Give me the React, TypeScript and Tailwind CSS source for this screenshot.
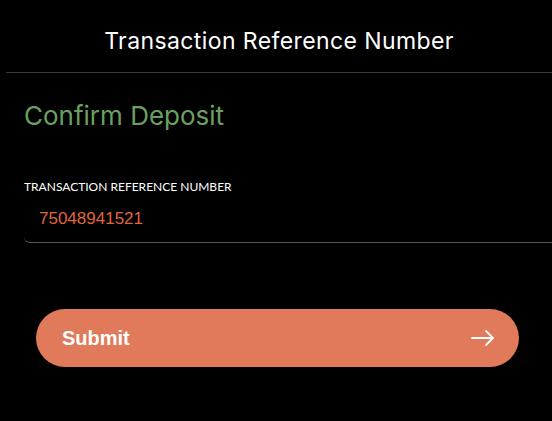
import React, { useState } from 'react';

const App = () => {
  const [refNo, setRefNo] = useState('75048941521');

  return (
    <div className="min-h-[421px] w-full bg-black">
      <div className="ml-[6px] flex h-[73px] items-center justify-center border-b border-[#3a3a3a] pt-[10px]">
        <h1 className="font-['Inter',sans-serif] text-[23px] font-normal tracking-[0.4px] text-white">
          Transaction Reference Number
        </h1>
      </div>

      <div className="pl-6 pt-[26px]">
        <h2 className="font-['Inter',sans-serif] text-[26px] leading-[34px] text-[#6aa062]">
          Confirm Deposit
        </h2>

        <div className="mt-[46px]">
          <label className="block font-['Lato',sans-serif] text-[12px] leading-[16px] text-white">
            TRANSACTION REFERENCE NUMBER
          </label>
          <input
            value={refNo}
            onChange={(e) => setRefNo(e.target.value)}
            className="mt-[8px] h-[40px] w-full rounded-bl-md border-b border-[#555] bg-transparent px-[15px] pb-[8px] font-['Liberation_Sans',Arial,sans-serif] text-[17px] text-[#e0663f] caret-[#e0663f] outline-none"
          />
        </div>
      </div>

      <div className="px-9 pt-[66px]">
        <button className="flex h-[58px] w-[483px] items-center justify-between rounded-full bg-[#e07a5a] pl-[26px] pr-[24px] text-white">
          <span className="font-['Liberation_Sans',Arial,sans-serif] text-[20px] font-bold">
            Submit
          </span>
          <svg width="24" height="18" viewBox="0 0 24 18" fill="none" stroke="white" strokeWidth="1.8" strokeLinecap="round" strokeLinejoin="round">
            <path d="M1 9h21M15 2l7 7-7 7" />
          </svg>
        </button>
      </div>
    </div>
  );
};

export default App;
